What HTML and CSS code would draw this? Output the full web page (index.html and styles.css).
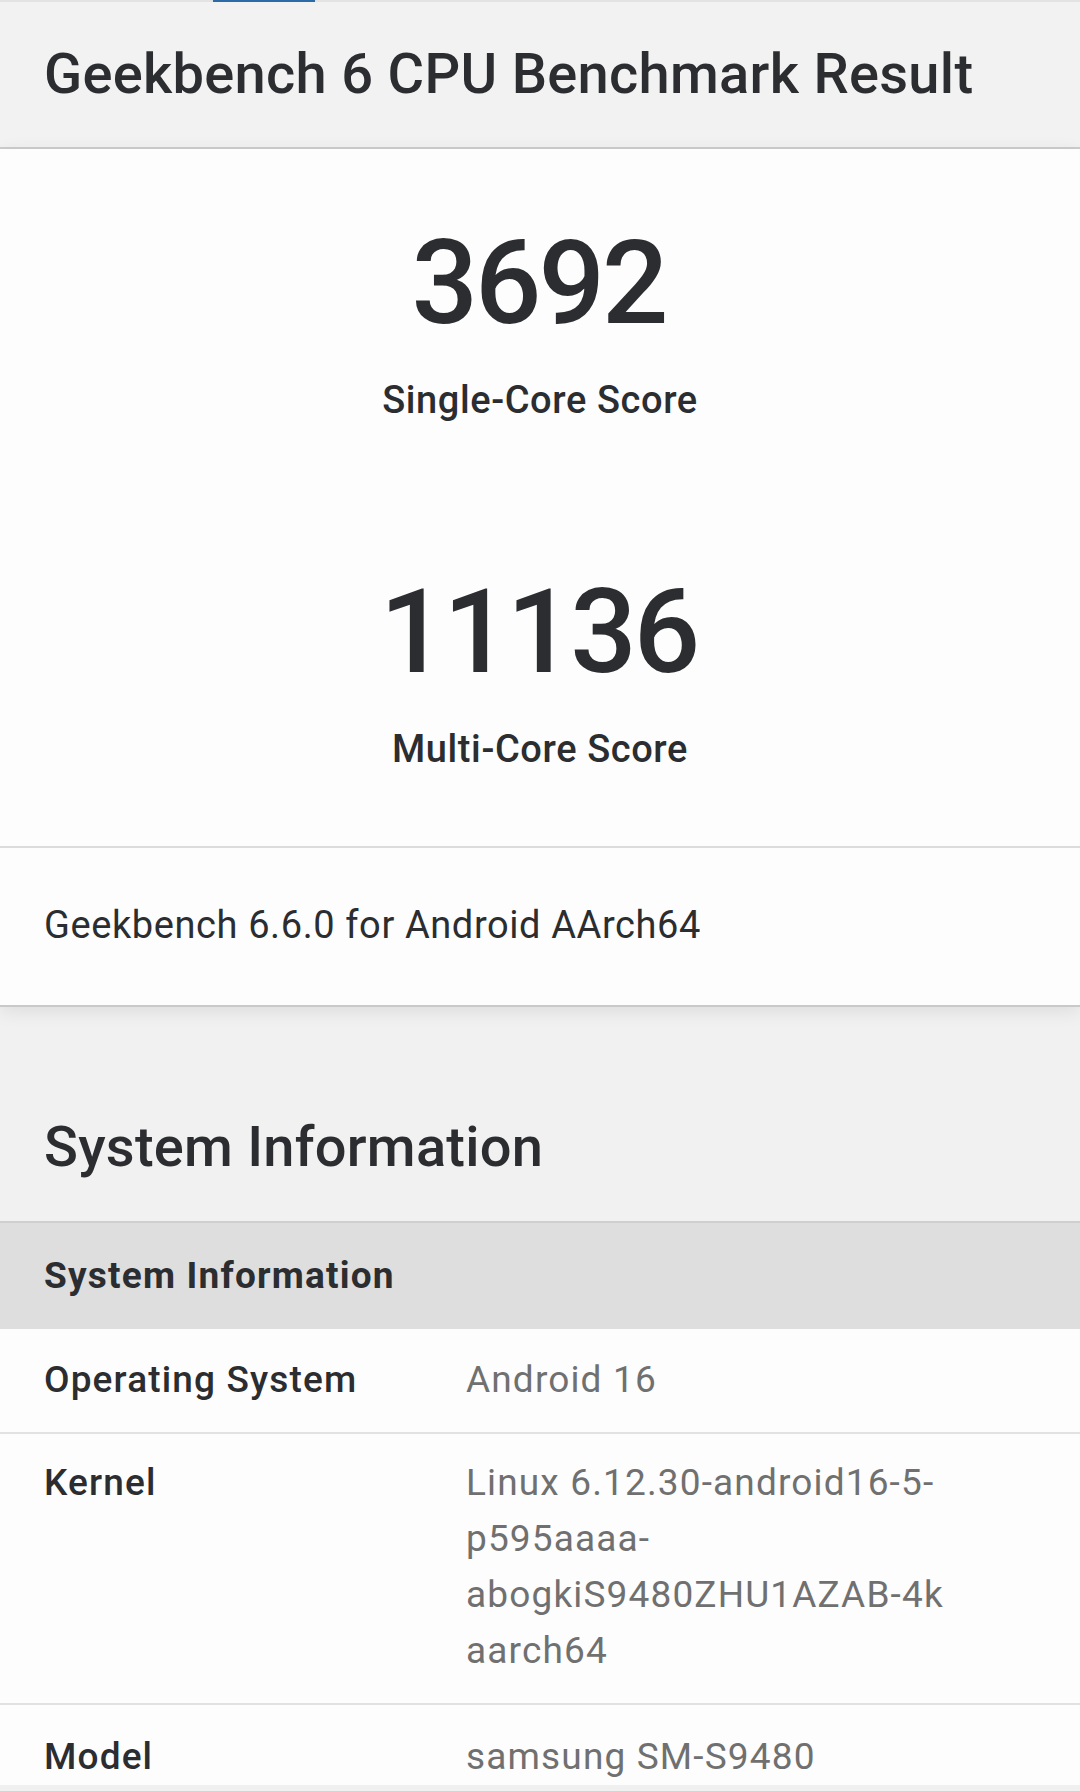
FILE: index.html
```html
<!DOCTYPE html>
<html lang="en">
<head>
<meta charset="utf-8">
<title>Geekbench 6 CPU Benchmark Result</title>
<link rel="stylesheet" href="styles.css">
</head>
<body>
  <div class="tabs"><span class="tab-indicator"></span></div>

  <header class="page-head">
    <h1 class="page-title">Geekbench 6 CPU Benchmark Result</h1>
  </header>

  <section class="card">
    <div class="scores">
      <div class="score">
        <div class="score-value">3692</div>
        <div class="score-label">Single-Core Score</div>
      </div>
      <div class="score">
        <div class="score-value">11136</div>
        <div class="score-label">Multi-Core Score</div>
      </div>
    </div>
    <div class="version">Geekbench 6.6.0 for Android AArch64</div>
  </section>

  <section class="sysinfo">
    <h2 class="section-title">System Information</h2>
    <div class="info-table">
      <div class="info-head">System Information</div>
      <div class="info-row">
        <div class="info-name">Operating System</div>
        <div class="info-value">Android 16</div>
      </div>
      <div class="info-row">
        <div class="info-name">Kernel</div>
        <div class="info-value">Linux 6.12.30-android16-5-p595aaaa-abogkiS9480ZHU1AZAB-4k aarch64</div>
      </div>
      <div class="info-row">
        <div class="info-name">Model</div>
        <div class="info-value">samsung SM-S9480</div>
      </div>
    </div>
  </section>

  <div class="bottom-bar"></div>
</body>
</html>
```

FILE: styles.css
```css
html, body {
  margin: 0;
  padding: 0;
}

body {
  background: #f1f1f1;
  font-family: Roboto, "Noto Sans", "Liberation Sans", sans-serif;
  color: #2b2d30;
  height: 1791px;
  overflow: hidden;
}

/* thin tab strip with the active tab marker */
.tabs {
  height: 2px;
  background: #e3e3e3;
  display: flex;
}

.tab-indicator {
  margin-left: 213px;
  width: 102px;
  height: 2px;
  background: #2d6aa8;
}

.page-head {
  background: #f2f2f2;
  border-bottom: 2px solid #cdcdcd;
  padding: 39px 44px 39px;
}

.page-title {
  margin: 0;
  font-size: 56px;
  font-weight: 500;
  line-height: 1.2;
  letter-spacing: 0.3px;
}

/* score card */
.card {
  background: #fdfdfd;
  border-bottom: 2px solid #c9c9c9;
  box-shadow: 0 4px 18px rgba(0, 0, 0, 0.09);
  position: relative;
}

.scores {
  border-bottom: 2px solid #dcdcdc;
}

.score {
  text-align: center;
  padding: 76px 0 74px;
}

.score-value {
  font-size: 117px;
  font-weight: 500;
  line-height: 1;
  letter-spacing: -3px;
  text-indent: -3px;
}

.score-label {
  font-size: 38px;
  font-weight: 500;
  line-height: 1.2;
  letter-spacing: 0.6px;
  margin-top: 36px;
}

.version {
  font-size: 38px;
  line-height: 1.2;
  letter-spacing: 0.6px;
  padding: 55px 44px 56px;
}

/* system information */
.sysinfo {
  padding-top: 107px;
}

.section-title {
  margin: 0;
  padding: 0 44px 40px;
  font-size: 56px;
  font-weight: 500;
  line-height: 1.2;
  letter-spacing: 0.25px;
  border-bottom: 2px solid #cfcfcf;
}

.info-head {
  background: #dedede;
  font-size: 37px;
  font-weight: 700;
  line-height: 1.5;
  letter-spacing: 1.2px;
  padding: 25px 44px 25px;
}

.info-row {
  display: grid;
  grid-template-columns: 422px 1fr;
  background: #fdfdfd;
  font-size: 37px;
  line-height: 56px;
  letter-spacing: 1.15px;
  padding: 23px 44px 24px;
  border-bottom: 2px solid #e2e2e2;
}

.info-row + .info-row {
  padding-top: 21px;
}

.info-row:last-child {
  padding-top: 24px;
}

.info-name {
  font-weight: 500;
}

.info-value {
  color: #707070;
}

.bottom-bar {
  position: fixed;
  left: 0;
  right: 0;
  bottom: 0;
  height: 6px;
  background: #f0f0f0;
}
```
